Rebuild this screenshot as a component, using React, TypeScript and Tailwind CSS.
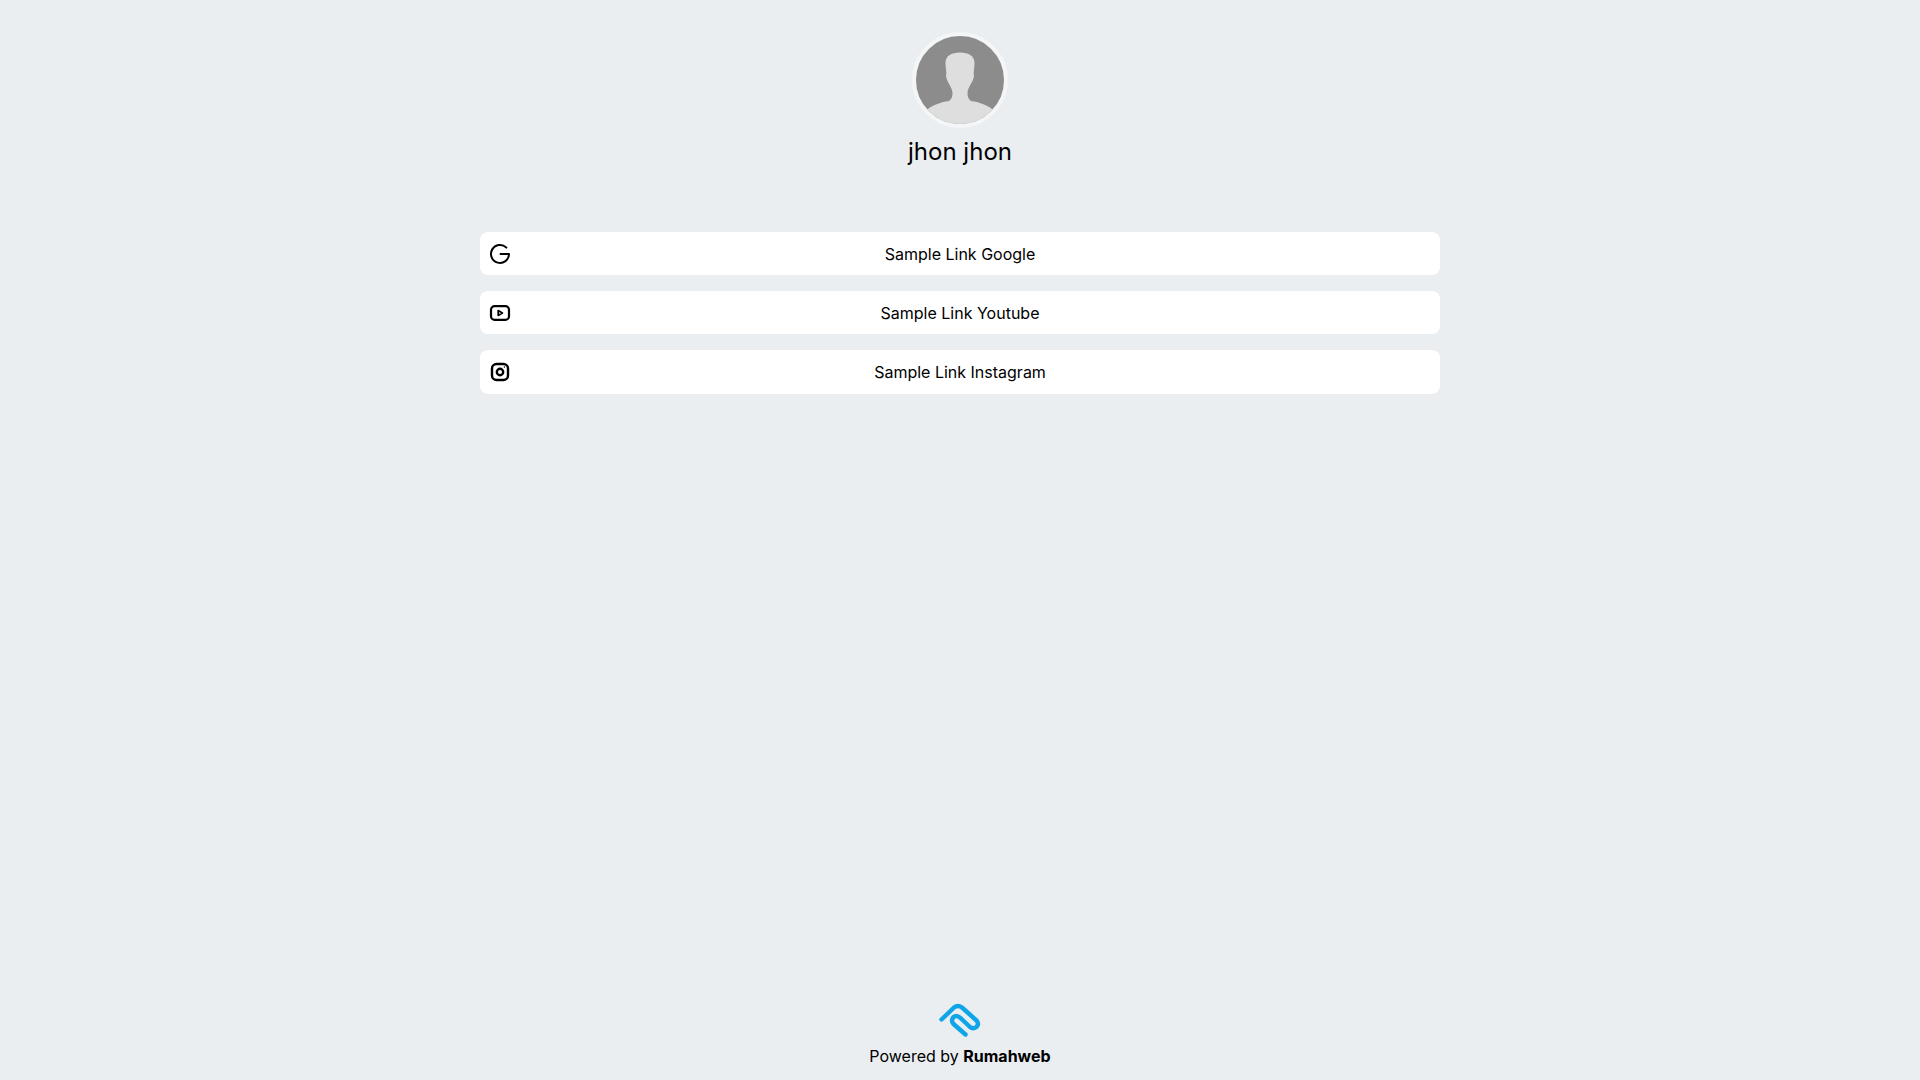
const links = [
  { label: 'Sample Link Google', icon: 'google' },
  { label: 'Sample Link Youtube', icon: 'youtube' },
  { label: 'Sample Link Instagram', icon: 'instagram' },
];

const GoogleIcon = () => (
  <svg width="24" height="24" viewBox="0 0 24 24" fill="none" stroke="#000" strokeWidth="2" strokeLinecap="round" strokeLinejoin="round">
    <path d="M18.4 5.6A9 9 0 1 0 21 12H12.5" />
  </svg>
);

const YoutubeIcon = () => (
  <svg width="24" height="24" viewBox="0 0 24 24" fill="none" stroke="#000" strokeWidth="2.2" strokeLinecap="round" strokeLinejoin="round">
    <rect x="3" y="5.2" width="18" height="13.6" rx="3.6" />
    <path d="M10.2 9.6l4.2 2.4-4.2 2.4z" strokeWidth="1.7" />
  </svg>
);

const InstagramIcon = () => (
  <svg width="24" height="24" viewBox="0 0 24 24" fill="none" stroke="#000" strokeWidth="2.4" strokeLinecap="round" strokeLinejoin="round">
    <rect x="4" y="4" width="16" height="16" rx="4.5" />
    <circle cx="12" cy="12" r="3.2" />
    <path d="M16.4 7v.01" strokeWidth="1.6" />
  </svg>
);

const Avatar = () => (
  <div className="w-24 h-24 rounded-full border-4 border-[#f3f5f6] bg-[#8c8c8c] overflow-hidden">
    <svg width="88" height="88" viewBox="0 0 88 88" className="block">
      <path
        fill="#dedede"
        d="M44 16.5C35 16.5 29.5 20 29.5 27C29.5 33 31 36 30 40C31 47 36 50 36.5 57C36.5 61 35.5 63 33 65C25 66 17 69 12 73L12 88L76 88L76 73C71 69 63 66 55 65C52.5 63 51.5 61 51.5 57C52 50 57 47 58 40C57 36 58.5 33 58.5 27C58.5 20 53 16.5 44 16.5z"
      />
    </svg>
  </div>
);

const Logo = () => (
  <svg width="42" height="34" viewBox="0 0 42 34" fill="none" stroke="#0ea5e9" strokeWidth="4.4" strokeLinecap="round" strokeLinejoin="round">
    <path d="M2.5 16.5L15 4.5Q19 1.5 23 4.5L37.5 17.5Q40.5 21 37.5 24Q34 26.5 31 24L21.5 15Q17.5 11.5 14.5 14Q11.5 17.5 14.5 21L26.5 31.5" />
  </svg>
);

export default function App() {
  return (
    <div className="min-h-screen bg-[#eaeef1] font-['Inter',sans-serif] text-black flex flex-col items-center">
      <div className="flex flex-col items-center pt-8">
        <Avatar />
        <h1 className="text-2xl leading-8 mt-2">jhon jhon</h1>
      </div>

      <div className="w-[960px] flex flex-col gap-4 mt-16">
        {links.map((link) => (
          <a key={link.label} className="relative h-[43.2px] bg-white rounded-lg flex items-center justify-center">
            <span className="absolute left-2 top-2.5">
              {link.icon === 'google' && <GoogleIcon />}
              {link.icon === 'youtube' && <YoutubeIcon />}
              {link.icon === 'instagram' && <InstagramIcon />}
            </span>
            <span className="text-base">{link.label}</span>
          </a>
        ))}
      </div>

      <div className="mt-auto flex flex-col items-center pb-3">
        <Logo />
        <p className="text-base leading-6 mt-[7px]">
          Powered by <span className="font-bold">Rumahweb</span>
        </p>
      </div>
    </div>
  );
}
